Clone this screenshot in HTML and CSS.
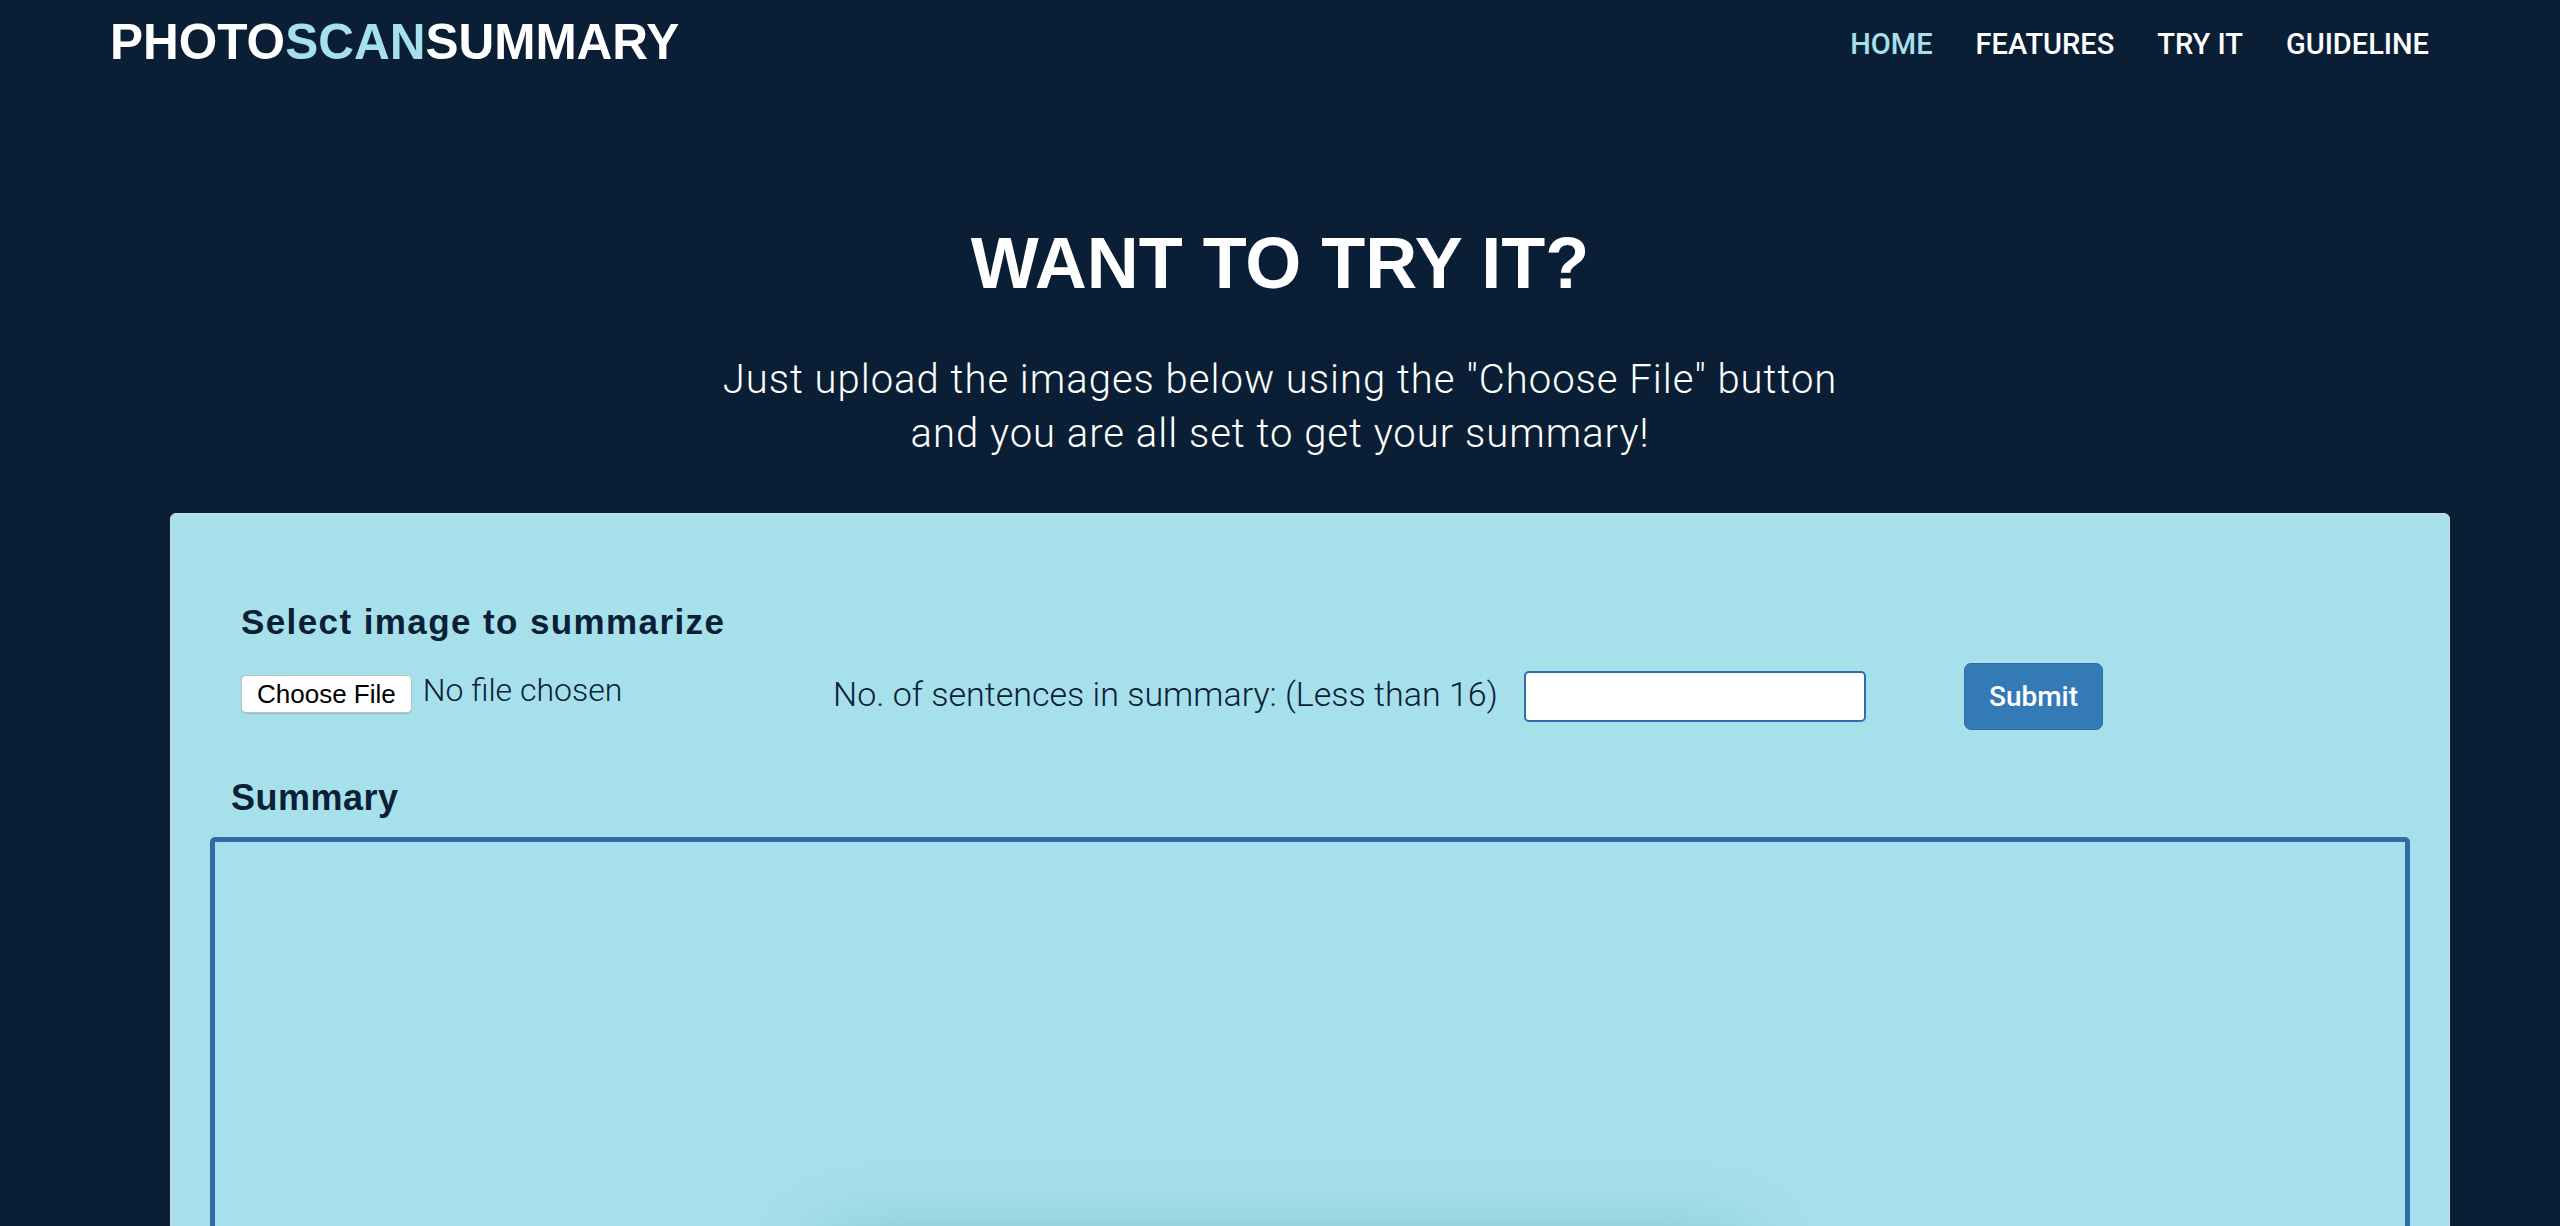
FILE: index.html
```html
<!DOCTYPE html>
<html lang="en">
<head>
<meta charset="utf-8">
<title>PhotoScanSummary</title>
<link rel="stylesheet" href="styles.css">
</head>
<body>
<header class="site-header">
  <a class="logo" href="#">PHOTO<span class="logo-accent">SCAN</span>SUMMARY</a>
  <nav class="nav">
    <a class="nav-link active" href="#">HOME</a>
    <a class="nav-link" href="#">FEATURES</a>
    <a class="nav-link" href="#">TRY IT</a>
    <a class="nav-link" href="#">GUIDELINE</a>
  </nav>
</header>

<section class="hero">
  <h1 class="hero-title">WANT TO TRY IT?</h1>
  <p class="hero-text">Just upload the images below using the "Choose File" button<br>and you are all set to get your summary!</p>
</section>

<main class="card">
  <form class="upload-form">
    <h3 class="form-title">Select image to summarize</h3>
    <div class="controls">
      <div class="file-group">
        <button type="button" class="file-btn">Choose File</button>
        <span class="file-name">No file chosen</span>
      </div>
      <label class="count-label">No. of sentences in summary: (Less than 16)</label>
      <input class="count-input" type="text">
      <button type="button" class="submit-btn">Submit</button>
    </div>
  </form>
  <h3 class="summary-title">Summary</h3>
  <div class="summary-box">
    <div class="summary-image"></div>
  </div>
</main>
</body>
</html>
```
FILE: styles.css
```css
html, body {
  margin: 0;
  padding: 0;
  overflow: hidden;
}
body {
  background: #0a1f35;
  font-family: "Liberation Sans", Arial, sans-serif;
  color: #0b2036;
}
.site-header {
  display: flex;
  justify-content: space-between;
  align-items: flex-start;
  height: 80px;
  box-sizing: border-box;
  padding: 13px 131px 0 110px;
}
.logo {
  font-family: "Liberation Sans", Arial, sans-serif;
  font-weight: 700;
  font-size: 49.5px;
  color: #ffffff;
  text-decoration: none;
  line-height: normal;
}
.logo-accent {
  color: #a6e1eb;
}
.nav {
  display: flex;
  gap: 43px;
  margin-top: 14px;
}
.nav-link {
  font-family: Roboto, "Liberation Sans", sans-serif;
  font-size: 29px;
  font-weight: 500;
  color: #ffffff;
  text-decoration: none;
  line-height: normal;
}
.nav-link.active {
  color: #a6e1eb;
}
.hero {
  text-align: center;
  padding-top: 142px;
}
.hero-title {
  margin: 0;
  font-family: "Liberation Sans", Arial, sans-serif;
  font-size: 72px;
  font-weight: 700;
  color: #ffffff;
  line-height: normal;
}
.hero-text {
  margin: 49px 0 0;
  font-family: Roboto, "Liberation Sans", sans-serif;
  font-weight: 300;
  font-size: 40px;
  letter-spacing: 1px;
  line-height: 54px;
  color: #ffffff;
}
.card {
  margin: 52px 110px 0 170px;
  background: #a6e1eb;
  border: 1px solid #d9dcdd;
  border-radius: 6px;
  padding: 88px 39px 0 39px;
  height: 1000px;
}
.upload-form {
  padding-left: 31px;
}
.form-title {
  margin: 0;
  font-size: 35px;
  font-weight: 700;
  letter-spacing: 1.4px;
  line-height: normal;
  color: #0b2036;
}
.controls {
  display: flex;
  align-items: center;
  margin-top: 21px;
  height: 67px;
}
.file-group {
  display: flex;
  align-items: center;
  width: 592px;
  flex: none;
  margin-bottom: 5px;
}
.file-btn {
  height: 38px;
  box-sizing: border-box;
  padding: 0 15px;
  background: #ffffff;
  border: 1px solid #b9c4c7;
  border-radius: 5px;
  box-shadow: 0 1px 1px rgba(0, 0, 0, 0.15);
  font-family: "Liberation Sans", Arial, sans-serif;
  font-size: 26px;
  color: #000000;
}
.file-name {
  margin-left: 11px;
  margin-top: -8px;
  font-family: Roboto, "Liberation Sans", sans-serif;
  font-weight: 300;
  font-size: 32px;
  color: #0b2036;
}
.count-label {
  width: 691px;
  flex: none;
  margin-bottom: 6px;
  font-family: Roboto, "Liberation Sans", sans-serif;
  font-weight: 300;
  font-size: 34px;
  color: #0b2036;
}
.count-input {
  width: 342px;
  height: 51px;
  box-sizing: border-box;
  border: 2px solid #2f6ea8;
  border-radius: 5px;
  background: #ffffff;
  flex: none;
}
.submit-btn {
  margin-left: 98px;
  width: 139px;
  height: 67px;
  box-sizing: border-box;
  background: #337ab7;
  border: 1px solid #2e6da4;
  border-radius: 7px;
  color: #ffffff;
  font-family: Roboto, "Liberation Sans", sans-serif;
  font-size: 28px;
  font-weight: 500;
  flex: none;
}
.summary-title {
  margin: 47px 0 0;
  padding-left: 21px;
  font-size: 36px;
  font-weight: 700;
  letter-spacing: 0.5px;
  line-height: normal;
  color: #0b2036;
}
.summary-box {
  margin-top: 18px;
  height: 800px;
  border: 5px solid #2f6ca6;
  border-radius: 5px;
  display: flex;
  justify-content: center;
  padding-top: 410px;
  box-sizing: border-box;
}
.summary-image {
  width: 900px;
  height: 300px;
  margin-left: -50px;
  box-shadow: 0 0 70px 10px rgba(20, 90, 110, 0.28);
}
```
